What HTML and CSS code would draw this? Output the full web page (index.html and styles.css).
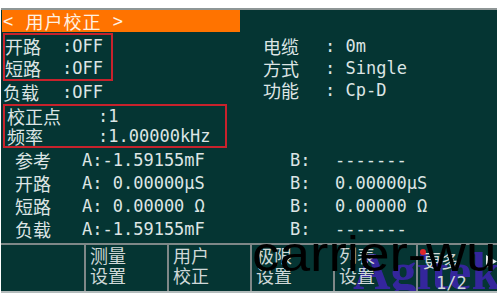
FILE: index.html
```html
<!DOCTYPE html>
<html>
<head>
<meta charset="utf-8">
<link rel="stylesheet" href="styles.css">
</head>
<body>
<div class="screen">
  <div class="header"><span>&lt; </span><span class="cn">用户校正</span><span> &gt;</span></div>
  <div class="top">
    <div class="col-left">
      <div class="box box1">
        <div class="row"><span class="lbl cn l1">开路</span><span class="val">:OFF</span></div>
        <div class="row"><span class="lbl cn l1">短路</span><span class="val">:OFF</span></div>
      </div>
      <div class="row plain"><span class="lbl cn l2">负载</span><span class="val">:OFF</span></div>
    </div>
    <div class="col-right">
      <div class="row"><span class="lbl cn l3">电缆</span><span class="val">: 0m</span></div>
      <div class="row"><span class="lbl cn l3">方式</span><span class="val">: Single</span></div>
      <div class="row"><span class="lbl cn l3">功能</span><span class="val">: Cp-D</span></div>
    </div>
  </div>
  <div class="box box2">
    <div class="row r20"><span class="lbl cn l4">校正点</span><span class="val">:1</span></div>
    <div class="row r20"><span class="lbl cn l4">频率</span><span class="val">:1.00000kHz</span></div>
  </div>
  <div class="table">
    <div class="trow"><span class="tl cn">参考</span><span class="ta">A:-1.59155mF</span><span class="tb">B:</span><span class="val">-------</span></div>
    <div class="trow"><span class="tl cn">开路</span><span class="ta">A: 0.00000µS</span><span class="tb">B:</span><span class="val">0.00000µS</span></div>
    <div class="trow"><span class="tl cn">短路</span><span class="ta">A: 0.00000 Ω</span><span class="tb">B:</span><span class="val">0.00000 Ω</span></div>
    <div class="trow"><span class="tl cn">负载</span><span class="ta">A:-1.59155mF</span><span class="tb">B:</span><span class="val">-------</span></div>
  </div>
  <div class="keys">
    <div class="key"></div>
    <div class="key"><span class="cn">测量</span><span class="cn">设置</span></div>
    <div class="key"><span class="cn">用户</span><span class="cn">校正</span></div>
    <div class="key"><span class="cn">极限</span><span class="cn">设置</span></div>
    <div class="key"><span class="cn">列表</span><span class="cn">设置</span></div>
    <div class="key more"><span class="cn">更多</span><span class="page">1/2</span></div>
  </div>
  <div class="logo">Agitek</div>
  <span class="dot"></span>
  <svg class="arrow" width="12" height="13" viewBox="0 0 12 13"><polygon points="0,0 11,6.5 0,13" fill="#e8eeee"/></svg>
  <div class="watermark">carrier-wu</div>
</div>
</body>
</html>
```
FILE: styles.css
```css
html, body {
  margin: 0;
  padding: 0;
  background: #ffffff;
  width: 500px;
  height: 300px;
  overflow: hidden;
}

.screen {
  position: relative;
  margin: 8px 0 0 1px;
  width: 496px;
  height: 281px;
  background: #053533;
  border-top: 2px solid #8e9696;
  border-bottom: 2px solid #b4bcbc;
  overflow: hidden;
  color: #dde5e5;
  font-family: "DejaVu Sans Mono", "Noto Sans CJK SC", monospace;
  font-size: 17px;
}

.cn {
  font-family: "Noto Sans CJK SC", sans-serif;
  font-size: 18px;
}

.header {
  margin-left: 1px;
  width: 237px;
  height: 22px;
  padding-left: 1px;
  background: #ff7300;
  color: #fff1e2;
  line-height: 22px;
  letter-spacing: 1px;
  white-space: pre;
  display: flex;
  align-items: center;
}

.top {
  display: grid;
  grid-template-columns: 262px 1fr;
  margin-top: 1px;
}

.box {
  border: 2px solid #c8222c;
  margin-left: 2px;
}

.box1 {
  width: 106px;
}

.box2 {
  width: 220px;
  margin-top: 1px;
}

.row {
  display: flex;
  align-items: center;
  height: 22px;
  white-space: pre;
}

.r20 {
  height: 20px;
}

.plain {
  margin-left: 2px;
}

.col-right {
  padding-top: 2px;
}

.lbl {
  display: inline-block;
  line-height: 22px;
}

.l1 { width: 57px; }
.l2 { width: 59px; }
.l3 { width: 62px; }
.l4 { width: 91px; padding-left: 2px; }

.val {
  white-space: pre;
}

.table {
  display: flex;
  flex-direction: column;
}

.trow {
  display: flex;
  align-items: center;
  height: 23px;
  padding-left: 14px;
  white-space: pre;
}

.tl { width: 67px; }
.ta { width: 208px; }
.tb { width: 45px; }

.keys {
  position: relative;
  z-index: 2;
  margin-top: 3px;
  height: 46px;
  border-top: 2px solid #7f8888;
  display: grid;
  grid-template-columns: repeat(6, 83px);
}

.key {
  display: flex;
  flex-direction: column;
  padding-left: 4px;
  color: #cfd8d8;
  line-height: 20px;
}

.key + .key {
  border-left: 2px solid #7f8888;
}

.more {
  padding-top: 5px;
  padding-left: 5px;
}

.page {
  padding-left: 13px;
  margin-top: 3px;
  font-size: 17px;
}

.logo {
  position: absolute;
  z-index: 1;
  left: 352px;
  top: 236px;
  font-family: "Liberation Serif", serif;
  font-weight: bold;
  font-size: 52px;
  line-height: 52px;
  color: #3a25a8;
  opacity: 0.9;
  white-space: nowrap;
}

.dot {
  position: absolute;
  z-index: 3;
  left: 419px;
  top: 239px;
  width: 6px;
  height: 6px;
  border-radius: 50%;
  background: #e0262a;
}

.arrow {
  position: absolute;
  z-index: 3;
  left: 485px;
  top: 245px;
}

.watermark {
  position: absolute;
  z-index: 4;
  left: 251px;
  top: 219px;
  font-family: "Liberation Sans", sans-serif;
  font-size: 50px;
  line-height: 50px;
  color: #000000;
  transform: scaleX(1.1);
  transform-origin: left top;
  white-space: nowrap;
}
```
